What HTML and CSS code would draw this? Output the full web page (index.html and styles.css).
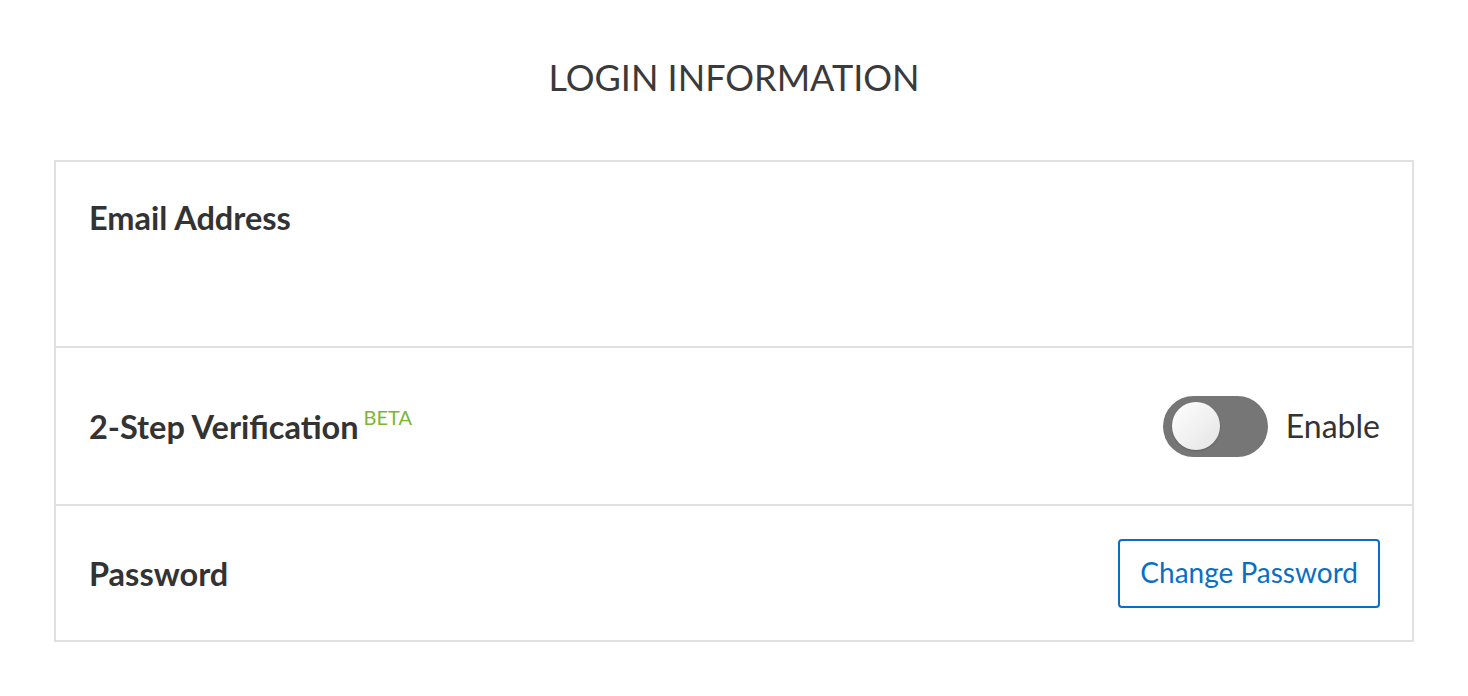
FILE: index.html
```html
<!DOCTYPE html>
<html>
<head>
<meta charset="utf-8">
<link rel="stylesheet" href="styles.css">
</head>
<body>
<main class="page">
  <h1 class="title">LOGIN INFORMATION</h1>
  <section class="card">
    <div class="row row-email">
      <div class="label">Email Address</div>
    </div>
    <div class="row row-2fa">
      <div class="label">2-Step Verification <sup class="beta">BETA</sup></div>
      <div class="toggle-wrap">
        <span class="toggle"><span class="knob"></span></span>
        <span class="toggle-text">Enable</span>
      </div>
    </div>
    <div class="row row-password">
      <div class="label">Password</div>
      <button class="btn">Change Password</button>
    </div>
  </section>
</main>
</body>
</html>
```
FILE: styles.css
```css
* { box-sizing: border-box; }
html, body { margin: 0; padding: 0; background: #fff; }
body {
  font-family: Lato, "Open Sans", sans-serif;
  color: #333;
}
.page {
  padding: 56px 54px 0;
}
.title {
  margin: 0 0 61px;
  text-align: center;
  font-weight: 400;
  font-size: 36px;
  line-height: 1.2;
  color: #3a3a3a;
}
.card {
  border: 2px solid #e0e0e0;
}
.row {
  display: flex;
  align-items: center;
  justify-content: space-between;
  padding: 0 32px 0 33px;
}
.row + .row { border-top: 2px solid #e0e0e0; }
.label {
  font-size: 32.5px;
  font-weight: 700;
  line-height: 1.2;
  color: #333;
  white-space: nowrap;
}
.row-email {
  align-items: flex-start;
  padding-top: 36px;
  height: 184px;
}
.row-2fa { height: 158px; }
.row-password { height: 136px; }
.beta {
  font-size: 20px;
  font-weight: 400;
  color: #7ab730;
  vertical-align: 0;
  position: relative;
  top: -14px;
  margin-left: -3px;
}
.toggle-wrap {
  display: flex;
  align-items: center;
  gap: 18px;
}
.toggle {
  display: flex;
  align-items: center;
  width: 105px;
  height: 61px;
  border-radius: 31px;
  background: #767676;
  padding-left: 9px;
}
.knob {
  width: 48px;
  height: 48px;
  border-radius: 50%;
  background: linear-gradient(135deg, #ffffff 0%, #e4e4e4 100%);
  box-shadow: 0 1px 2px rgba(0,0,0,0.2);
}
.toggle-text {
  font-size: 32px;
  color: #333;
  line-height: 1.2;
}
.btn {
  font-family: Lato, "Open Sans", sans-serif;
  font-size: 28px;
  line-height: 1.2;
  color: #0a6fc2;
  background: #fff;
  border: 2px solid #0a6fc2;
  border-radius: 4px;
  height: 69px;
  padding: 0 20px;
  white-space: nowrap;
}
```
